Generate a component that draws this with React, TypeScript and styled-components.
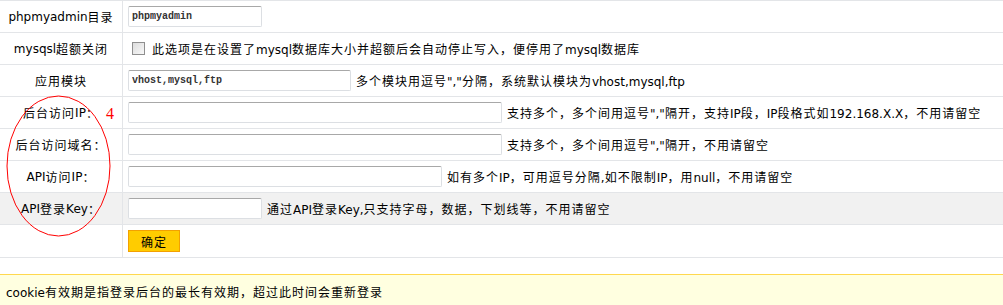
import React from "react";
import styled, { createGlobalStyle } from "styled-components";

const Global = createGlobalStyle`
  html, body { margin: 0; padding: 0; background: #fff; }
  body {
    font-family: "DejaVu Sans", "Noto Sans CJK SC", sans-serif;
    font-size: 12px;
    color: #000;
  }
`;

const Page = styled.div`
  position: relative;
  width: 1003px;
  height: 305px;
  overflow: hidden;
`;

const Table = styled.div`
  border-top: 1px solid #e3e5e8;
`;

const Row = styled.div<{ $gray?: boolean; $tall?: boolean }>`
  display: grid;
  grid-template-columns: 123px 1fr;
  height: ${(p) => (p.$tall ? 32 : 31)}px;
  border-bottom: 1px solid #e3e5e8;
  background: ${(p) => (p.$gray ? "#f1f1f1" : "#fff")};
`;

const Label = styled.div`
  display: flex;
  align-items: center;
  justify-content: center;
  border-right: 1px solid #e3e5e8;
  white-space: nowrap;
`;

const Cell = styled.div`
  display: flex;
  align-items: center;
  gap: 5px;
  padding-left: 5px;
  white-space: nowrap;
`;

const Cjk = styled.span`
  font-family: "Noto Sans CJK SC", sans-serif;
  letter-spacing: 1px;
`;

const TextInput = styled.input<{ $w: number }>`
  box-sizing: border-box;
  width: ${(p) => p.$w}px;
  height: 21px;
  margin: 0;
  padding: 0 3px;
  border: 1px solid #dcdfe3;
  border-top-color: #a8a8a8;
  border-radius: 2px;
  background: #fff;
  font-family: "Liberation Mono", monospace;
  font-size: 10px;
  font-weight: bold;
  color: #333;
  outline: none;
`;

const Check = styled.input`
  appearance: none;
  box-sizing: border-box;
  width: 13px;
  height: 13px;
  margin: 0 2px 0 4px;
  border: 1px solid #8f8f8f;
  background: linear-gradient(135deg, #dcdcdc, #f8f8f8);
`;

const Help = styled.span``;

const Button = styled.button`
  box-sizing: border-box;
  width: 52px;
  height: 22px;
  margin: 0;
  padding: 0;
  border: 1px solid #f3a100;
  background: #ffcc00;
  font-family: "DejaVu Sans", "Noto Sans CJK SC", sans-serif;
  font-size: 12px;
  color: #000;
`;

const Notice = styled.div`
  margin-top: 16px;
  border-top: 1px solid #ffd84f;
  background: #ffffe0;
  padding: 8px 6px;
  line-height: 18px;
`;

const Overlay = styled.svg`
  position: absolute;
  left: 0;
  top: 0;
  pointer-events: none;
`;

const CJK_RE = /([\u2E80-\u9FFF\uFF00-\uFFEF]+)/;

function T({ s }: { s: string }) {
  const parts = s.split(CJK_RE).filter((p) => p.length > 0);
  return (
    <>
      {parts.map((p, i) =>
        CJK_RE.test(p) ? <Cjk key={i}>{p}</Cjk> : <React.Fragment key={i}>{p}</React.Fragment>
      )}
    </>
  );
}

export default function App() {
  return (
    <Page>
      <Global />
      <Table>
        <Row>
          <Label><T s="phpmyadmin目录" /></Label>
          <Cell>
            <TextInput $w={134} defaultValue="phpmyadmin" />
          </Cell>
        </Row>
        <Row>
          <Label><T s="mysqsl超额关闭" /></Label>
          <Cell>
            <Check type="checkbox" />
            <Help><T s="此选项是在设置了mysql数据库大小并超额后会自动停止写入，便停用了mysql数据库" /></Help>
          </Cell>
        </Row>
        <Row>
          <Label><T s="应用模块" /></Label>
          <Cell>
            <TextInput $w={223} defaultValue="vhost,mysql,ftp" />
            <Help><T s={'多个模块用逗号","分隔，系统默认模块为vhost,mysql,ftp'} /></Help>
          </Cell>
        </Row>
        <Row>
          <Label><T s="后台访问IP：" /></Label>
          <Cell>
            <TextInput $w={374} />
            <Help><T s={'支持多个，多个间用逗号","隔开，支持IP段，IP段格式如192.168.X.X，不用请留空'} /></Help>
          </Cell>
        </Row>
        <Row>
          <Label><T s="后台访问域名：" /></Label>
          <Cell>
            <TextInput $w={374} />
            <Help><T s={'支持多个，多个间用逗号","隔开，不用请留空'} /></Help>
          </Cell>
        </Row>
        <Row>
          <Label><T s="API访问IP：" /></Label>
          <Cell>
            <TextInput $w={314} />
            <Help><T s="如有多个IP，可用逗号分隔,如不限制IP，用null，不用请留空" /></Help>
          </Cell>
        </Row>
        <Row $gray>
          <Label><T s="API登录Key：" /></Label>
          <Cell>
            <TextInput $w={134} />
            <Help><T s="通过API登录Key,只支持字母，数据，下划线等，不用请留空" /></Help>
          </Cell>
        </Row>
        <Row $tall>
          <Label />
          <Cell>
            <Button><T s="确定" /></Button>
          </Cell>
        </Row>
      </Table>
      <Notice><T s="cookie有效期是指登录后台的最长有效期，超过此时间会重新登录" /></Notice>
      <Overlay width="1003" height="305" viewBox="0 0 1003 305">
        <ellipse cx="58.5" cy="166" rx="51.5" ry="70" fill="none" stroke="#ff0000" strokeWidth="1" />
        <text x="106" y="119" fill="#ff0000" fontFamily="'Liberation Serif', serif" fontSize="16">
          4
        </text>
      </Overlay>
    </Page>
  );
}
